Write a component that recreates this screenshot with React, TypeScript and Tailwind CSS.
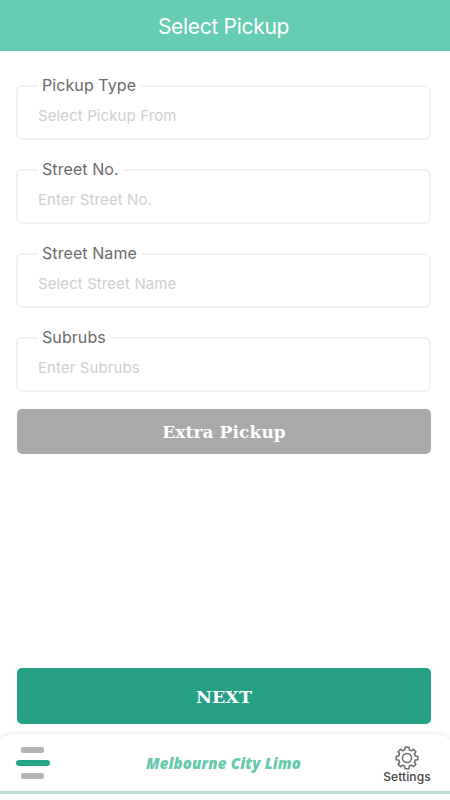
import { useState } from 'react'

interface Field {
  name: string
  label: string
  placeholder: string
}

const fields: Field[] = [
  { name: 'type', label: 'Pickup Type', placeholder: 'Select Pickup From' },
  { name: 'streetNo', label: 'Street No.', placeholder: 'Enter Street No.' },
  { name: 'streetName', label: 'Street Name', placeholder: 'Select Street Name' },
  { name: 'suburb', label: 'Subrubs', placeholder: 'Enter Subrubs' },
]

function GearIcon() {
  return (
    <svg viewBox="0 0 24 24" className="w-6 h-6" fill="none" stroke="#6a6a6a" strokeWidth="1.5" strokeLinejoin="round">
      <path d="M10.1 1.2h3.8l.4 2.7 2.100.9 2-1.500 2.500 2.500-1.500 2 .9 2.100 2.500.3v3.600l-2.500.3-.9 2.100 1.500 2-2.500 2.500-2-1.500-2.100.9-.4 2.700h-3.800l-.4-2.700-2.100-.9-2 1.500-2.500-2.500 1.500-2-.9-2.100-2.500-.3v-3.600l2.500-.3.9-2.100-1.500-2 2.500-2.500 2 1.500 2.100-.9z" />
      <circle cx="12" cy="12" r="4.5" />
    </svg>
  )
}

export default function App() {
  const [values, setValues] = useState<Record<string, string>>({})

  return (
    <div className="h-[800px] w-[450px] flex flex-col bg-white overflow-hidden font-['Inter',sans-serif]">
      {/* Header */}
      <header className="h-[51px] shrink-0 bg-[#66ccb3] flex items-center justify-center pt-[3px] pr-[3px]">
        <h1 className="text-white text-[21px] leading-6 tracking-[-0.3px]">Select Pickup</h1>
      </header>

      {/* Form */}
      <main className="flex-1 flex flex-col pl-4 pr-[19px] pt-[25px]">
        <div className="flex flex-col gap-5">
          {fields.map((f) => (
            <fieldset key={f.name} className="h-16 min-w-0 border-2 border-[#f1f1f1] rounded-md pl-5">
              <legend className="pl-[4px] pr-[5px] h-[19px] text-[16px] leading-[19px] tracking-[0.08px] text-[#6b6b6b]">{f.label}</legend>
              <input
                value={values[f.name] ?? ''}
                onChange={(e) => setValues({ ...values, [f.name]: e.target.value })}
                placeholder={f.placeholder}
                className="block w-full h-6 mt-2 text-[15px] tracking-[0.1px] outline-none placeholder:text-[#cfcfcf]"
              />
            </fieldset>
          ))}
        </div>

        <button className="mt-[17px] ml-px h-[45px] pt-[2px] shrink-0 rounded-[5px] bg-[#aaaaaa] text-white font-['DejaVu_Serif',serif] font-bold text-[17px] tracking-[0.1px]">
          Extra Pickup
        </button>

        <button className="mt-auto mb-[10px] ml-px h-14 pt-[2px] shrink-0 rounded-[5px] bg-[#259f85] text-white font-['DejaVu_Serif',serif] font-bold text-[17.5px]">
          NEXT
        </button>
      </main>

      {/* Bottom bar */}
      <nav className="h-[57px] shrink-0 bg-white rounded-t-[20px_7px] shadow-[0_-1px_5px_rgba(0,0,0,0.1)] flex items-center justify-between pl-4 pr-[19px]">
        <button className="w-12 flex flex-col gap-[7px]" aria-label="Menu">
          <span className="ml-[5px] w-[23px] h-[6px] rounded-[2px] bg-[#b5b5b5]" />
          <span className="w-[34px] h-[6px] rounded-full bg-[#27a486]" />
          <span className="ml-[5px] w-[23px] h-[6px] rounded-[2px] bg-[#b5b5b5]" />
        </button>
        <span className="font-['Open_Sans',sans-serif] font-extrabold italic text-[15px] leading-6 tracking-[0.15px] text-[#67c9ae]">Melbourne City Limo</span>
        <button className="w-12 flex flex-col items-center pt-[4px]">
          <GearIcon />
          <span className="text-[12px] leading-[14px] tracking-[0.1px] font-medium text-[#444]">Settings</span>
        </button>
      </nav>
      <div className="h-[3px] shrink-0 bg-[#b9dcd5]" />
      <div className="h-[6px] shrink-0 bg-white" />
    </div>
  )
}
